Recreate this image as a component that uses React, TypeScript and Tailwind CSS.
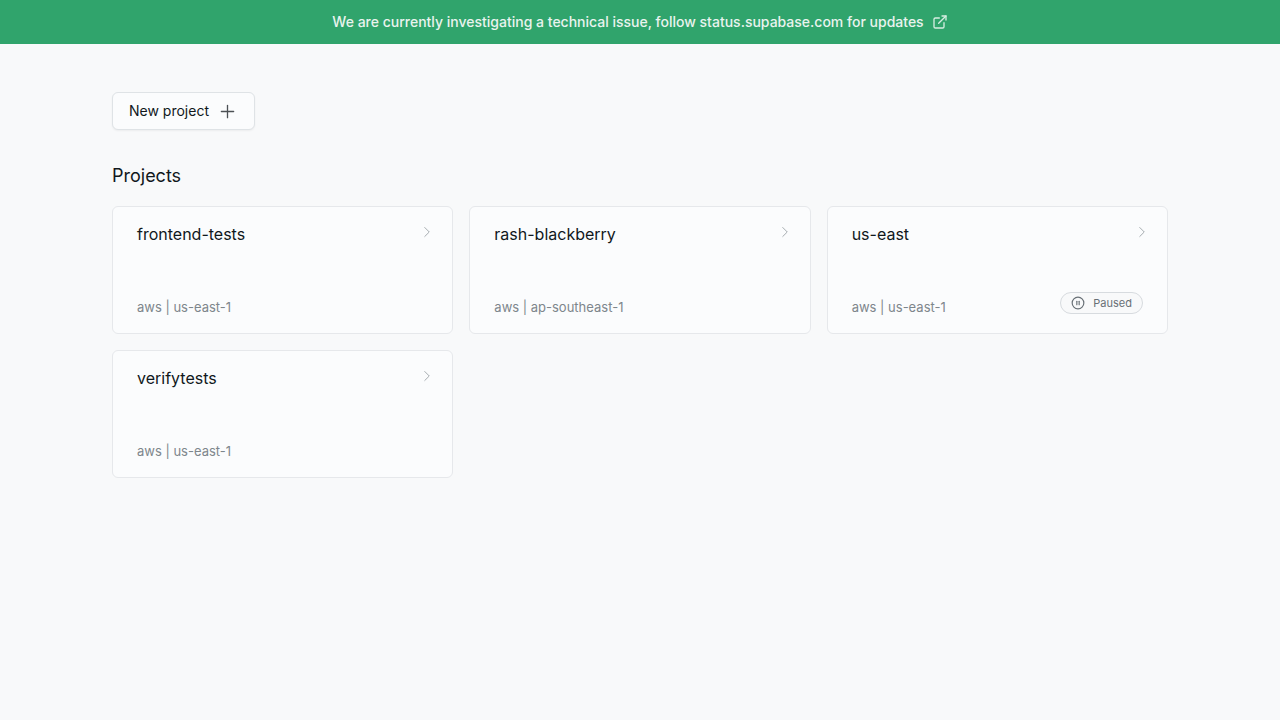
import { ChevronRight, ExternalLink, PauseCircle, Plus } from "lucide-react";

type Project = { name: string; region: string; paused?: boolean };

const projects: Project[] = [
  { name: "frontend-tests", region: "us-east-1" },
  { name: "rash-blackberry", region: "ap-southeast-1" },
  { name: "us-east", region: "us-east-1", paused: true },
  { name: "verifytests", region: "us-east-1" },
];

function ProjectCard({ name, region, paused }: Project) {
  return (
    <li>
      <a
        href="#"
        className="flex min-h-32 flex-col justify-between rounded-md border border-[#e6e8eb] bg-[#fbfcfd] py-4 pr-4 pl-6"
      >
        <div className="flex items-start justify-between">
          <h3 className="text-base leading-[22px] text-[#11181c]">{name}</h3>
          <ChevronRight size={18} strokeWidth={1} className="text-[#889096]" />
        </div>
        <div className="flex items-end justify-between pr-2">
          <p className="text-[13px] leading-5 text-[#7e868c]">aws | {region}</p>
          {paused && (
            <span className="mb-[3px] flex items-center gap-2 rounded-full border border-[#d7dbdf] bg-[#f8f9fa] px-2.5 py-0.5 text-[11px] leading-4 text-[#687076]">
              <PauseCircle size={14} strokeWidth={2} />
              Paused
            </span>
          )}
        </div>
      </a>
    </li>
  );
}

export default function App() {
  return (
    <div className="min-h-screen bg-[#f8f9fa] font-['Inter',sans-serif]">
      <a
        href="#"
        className="flex h-11 items-center justify-center gap-2 bg-[#30a46c] text-sm font-medium text-[#e9f3ee]"
      >
        We are currently investigating a technical issue, follow status.supabase.com for updates
        <ExternalLink size={16} strokeWidth={2} className="text-[#d6ede1]" />
      </a>
      <main className="px-28 py-12">
        <button
          type="button"
          className="flex items-center gap-2 rounded-md border border-[#dfe3e6] bg-[#fbfcfd] px-4 text-sm leading-9 text-[#11181c] shadow-xs"
        >
          New project
          <Plus size={21} strokeWidth={1.5} className="text-[#4c5155]" />
        </button>
        <section className="mt-8">
          <h2 className="text-lg leading-7 text-[#11181c]">Projects</h2>
          <ul className="mt-4 grid grid-cols-3 gap-4">
            {projects.map((project) => (
              <ProjectCard key={project.name} {...project} />
            ))}
          </ul>
        </section>
      </main>
    </div>
  );
}
